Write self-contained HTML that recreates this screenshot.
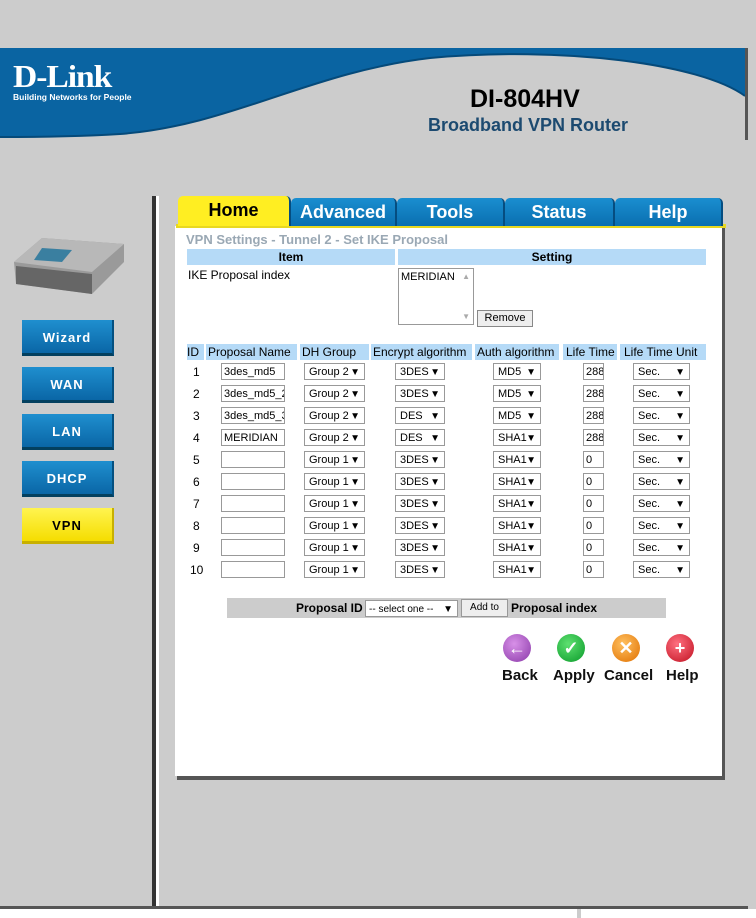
<!DOCTYPE html>
<html><head><meta charset="utf-8"><style>
*{margin:0;padding:0;box-sizing:border-box}
body{width:756px;height:918px;background:#cccccc;position:relative;overflow:hidden;font-family:"Liberation Sans",Arial,sans-serif;font-size:12px;color:#000}
.a{position:absolute}
.tab{position:absolute;top:198px;height:28px;background:linear-gradient(#1a8ed0,#0a6fb0);color:#fff;font-weight:bold;font-size:18px;text-align:center;line-height:28px;border-radius:5px 5px 0 0;border-right:2px solid #054d80}
.nb{position:absolute;left:22px;width:92px;height:36px;background:linear-gradient(#1f8fcf,#0a66a6);border-bottom:3px solid #03405f;border-right:2px solid #045080;color:#fff;font-weight:bold;font-size:13px;text-align:center;line-height:36px;letter-spacing:1px}
.hd{position:absolute;background:#b5daf7;height:16px;line-height:16px}
.in{position:absolute;height:17px;border:1px solid #999;background:#fff;font-size:11px;line-height:17px;padding-left:2px;color:#000;overflow:hidden;white-space:nowrap}
.sel{position:absolute;height:17px;border:1px solid #999;background:#fff;font-size:11px;line-height:17px;padding-left:4px;white-space:nowrap}
.sel b{position:absolute;right:4px;top:0;font-size:10px}
.id{position:absolute;left:193px;font-size:12px}
.ic{position:absolute;width:28px;height:28px;border-radius:50%;color:#fff;font-weight:bold;text-align:center;line-height:28px;font-size:18px}
.il{position:absolute;top:667px;font-size:15px;font-weight:bold;color:#111}
</style></head><body>
<svg class="a" style="left:0;top:48px" width="756" height="95">
<rect width="756" height="95" fill="#cccccc"/>
<path d="M0 0 H745 V48 C700 15 560 -2 430 10 C310 24 230 78 120 86 C70 89 30 89 0 89 Z" fill="#0a64a2"/>
<path d="M0 89 C30 89 70 89 120 86 C230 78 310 24 430 10 C560 -2 700 15 745 48" fill="none" stroke="#054a7a" stroke-width="2"/>
<rect x="745" y="0" width="3" height="92" fill="#555"/>
</svg>
<div class="a" style="left:13px;top:58px;color:#fff;font-family:'Liberation Serif',serif;font-weight:bold;font-size:32px;letter-spacing:-1px;transform:scaleX(1.05);transform-origin:left">D-Link</div>
<div class="a" style="left:13px;top:92px;color:#fff;font-size:8.5px;font-weight:bold">Building Networks for People</div>
<div class="a" style="left:470px;top:85px;font-size:25px;font-weight:bold">DI-804HV</div>
<div class="a" style="left:428px;top:115px;font-size:18px;font-weight:bold;color:#1c4a70">Broadband VPN Router</div>

<div class="a" style="left:152px;top:196px;width:4px;height:710px;background:#333"></div>
<div class="a" style="left:156px;top:196px;width:3px;height:710px;background:#fff"></div>
<div class="a" style="left:0;top:906px;width:748px;height:3px;background:#555"></div>
<div class="a" style="left:0;top:909px;width:756px;height:9px;background:#fff"></div>
<div class="a" style="left:577px;top:909px;width:4px;height:9px;background:#ccc"></div>

<svg class="a" style="left:12px;top:232px" width="114" height="70"><path d="M2 30 L30 6 L112 12 L112 30 L80 62 L4 52 Z" fill="#9a9a9a"/><path d="M2 30 L30 6 L112 12 L80 40 Z" fill="#b8b8b8"/><path d="M30 16 L60 18 L50 30 L22 28Z" fill="#3a7fa0"/><path d="M4 34 L80 42 L80 62 L4 52Z" fill="#666"/></svg>
<div class="nb" style="top:320px">Wizard</div>
<div class="nb" style="top:367px">WAN</div>
<div class="nb" style="top:414px">LAN</div>
<div class="nb" style="top:461px">DHCP</div>
<div class="nb" style="top:508px;background:linear-gradient(#fff450,#f5dd00);color:#000;border-color:#c8b000">VPN</div>

<div class="a" style="left:177px;top:228px;width:548px;height:552px;background:#555"></div>
<div class="a" style="left:175px;top:226px;width:547px;height:550px;background:#fff"></div>
<div class="a" style="left:176px;top:224px;width:550px;height:4px;background:#e8d820"></div>
<div class="tab" style="left:178px;width:113px;background:#ffee22;color:#000;top:196px;height:30px">Home</div>
<div class="tab" style="left:291px;width:106px">Advanced</div>
<div class="tab" style="left:397px;width:108px">Tools</div>
<div class="tab" style="left:505px;width:110px">Status</div>
<div class="tab" style="left:615px;width:108px">Help</div>

<div class="a" style="left:186px;top:232px;font-size:13px;font-weight:bold;color:#9aa8b4">VPN Settings - Tunnel 2 - Set IKE Proposal</div>
<div class="hd" style="left:187px;top:249px;width:208px;text-align:center;font-weight:bold">Item</div>
<div class="hd" style="left:398px;top:249px;width:308px;text-align:center;font-weight:bold">Setting</div>
<div class="a" style="left:188px;top:268px">IKE Proposal index</div>
<div class="a" style="left:398px;top:268px;width:76px;height:57px;border:1px solid #999;font-size:11px;padding:2px"><span>MERIDIAN</span><span style="position:absolute;right:3px;top:3px;color:#aaa;font-size:8px">▲</span><span style="position:absolute;right:3px;bottom:3px;color:#aaa;font-size:8px">▼</span></div>
<div class="a" style="left:477px;top:310px;width:56px;height:17px;border:1px solid #888;background:#eee;font-size:11px;text-align:center;line-height:15px">Remove</div>

<div class="hd" style="left:187px;top:344px;width:17px">ID</div>
<div class="hd" style="left:206px;top:344px;width:91px;padding-left:2px">Proposal Name</div>
<div class="hd" style="left:300px;top:344px;width:69px;padding-left:2px">DH Group</div>
<div class="hd" style="left:371px;top:344px;width:101px;padding-left:2px">Encrypt algorithm</div>
<div class="hd" style="left:475px;top:344px;width:84px;padding-left:2px">Auth algorithm</div>
<div class="hd" style="left:563px;top:344px;width:54px;padding-left:3px">Life Time</div>
<div class="hd" style="left:620px;top:344px;width:86px;padding-left:4px">Life Time Unit</div>

<div class="id" style="top:365px">1</div><div class="in" style="left:221px;top:363px;width:64px">3des_md5</div><div class="sel" style="left:304px;top:363px;width:61px">Group 2<b>▼</b></div><div class="sel" style="left:395px;top:363px;width:50px">3DES<b>▼</b></div><div class="sel" style="left:493px;top:363px;width:48px">MD5<b>▼</b></div><div class="in" style="left:583px;top:363px;width:21px">288</div><div class="sel" style="left:633px;top:363px;width:57px">Sec.<b>▼</b></div>
<div class="id" style="top:387px">2</div><div class="in" style="left:221px;top:385px;width:64px">3des_md5_2</div><div class="sel" style="left:304px;top:385px;width:61px">Group 2<b>▼</b></div><div class="sel" style="left:395px;top:385px;width:50px">3DES<b>▼</b></div><div class="sel" style="left:493px;top:385px;width:48px">MD5<b>▼</b></div><div class="in" style="left:583px;top:385px;width:21px">288</div><div class="sel" style="left:633px;top:385px;width:57px">Sec.<b>▼</b></div>
<div class="id" style="top:409px">3</div><div class="in" style="left:221px;top:407px;width:64px">3des_md5_3</div><div class="sel" style="left:304px;top:407px;width:61px">Group 2<b>▼</b></div><div class="sel" style="left:395px;top:407px;width:50px">DES<b>▼</b></div><div class="sel" style="left:493px;top:407px;width:48px">MD5<b>▼</b></div><div class="in" style="left:583px;top:407px;width:21px">288</div><div class="sel" style="left:633px;top:407px;width:57px">Sec.<b>▼</b></div>
<div class="id" style="top:431px">4</div><div class="in" style="left:221px;top:429px;width:64px">MERIDIAN</div><div class="sel" style="left:304px;top:429px;width:61px">Group 2<b>▼</b></div><div class="sel" style="left:395px;top:429px;width:50px">DES<b>▼</b></div><div class="sel" style="left:493px;top:429px;width:48px">SHA1<b>▼</b></div><div class="in" style="left:583px;top:429px;width:21px">288</div><div class="sel" style="left:633px;top:429px;width:57px">Sec.<b>▼</b></div>
<div class="id" style="top:453px">5</div><div class="in" style="left:221px;top:451px;width:64px"></div><div class="sel" style="left:304px;top:451px;width:61px">Group 1<b>▼</b></div><div class="sel" style="left:395px;top:451px;width:50px">3DES<b>▼</b></div><div class="sel" style="left:493px;top:451px;width:48px">SHA1<b>▼</b></div><div class="in" style="left:583px;top:451px;width:21px">0</div><div class="sel" style="left:633px;top:451px;width:57px">Sec.<b>▼</b></div>
<div class="id" style="top:475px">6</div><div class="in" style="left:221px;top:473px;width:64px"></div><div class="sel" style="left:304px;top:473px;width:61px">Group 1<b>▼</b></div><div class="sel" style="left:395px;top:473px;width:50px">3DES<b>▼</b></div><div class="sel" style="left:493px;top:473px;width:48px">SHA1<b>▼</b></div><div class="in" style="left:583px;top:473px;width:21px">0</div><div class="sel" style="left:633px;top:473px;width:57px">Sec.<b>▼</b></div>
<div class="id" style="top:497px">7</div><div class="in" style="left:221px;top:495px;width:64px"></div><div class="sel" style="left:304px;top:495px;width:61px">Group 1<b>▼</b></div><div class="sel" style="left:395px;top:495px;width:50px">3DES<b>▼</b></div><div class="sel" style="left:493px;top:495px;width:48px">SHA1<b>▼</b></div><div class="in" style="left:583px;top:495px;width:21px">0</div><div class="sel" style="left:633px;top:495px;width:57px">Sec.<b>▼</b></div>
<div class="id" style="top:519px">8</div><div class="in" style="left:221px;top:517px;width:64px"></div><div class="sel" style="left:304px;top:517px;width:61px">Group 1<b>▼</b></div><div class="sel" style="left:395px;top:517px;width:50px">3DES<b>▼</b></div><div class="sel" style="left:493px;top:517px;width:48px">SHA1<b>▼</b></div><div class="in" style="left:583px;top:517px;width:21px">0</div><div class="sel" style="left:633px;top:517px;width:57px">Sec.<b>▼</b></div>
<div class="id" style="top:541px">9</div><div class="in" style="left:221px;top:539px;width:64px"></div><div class="sel" style="left:304px;top:539px;width:61px">Group 1<b>▼</b></div><div class="sel" style="left:395px;top:539px;width:50px">3DES<b>▼</b></div><div class="sel" style="left:493px;top:539px;width:48px">SHA1<b>▼</b></div><div class="in" style="left:583px;top:539px;width:21px">0</div><div class="sel" style="left:633px;top:539px;width:57px">Sec.<b>▼</b></div>
<div class="id" style="top:563px;left:190px">10</div><div class="in" style="left:221px;top:561px;width:64px"></div><div class="sel" style="left:304px;top:561px;width:61px">Group 1<b>▼</b></div><div class="sel" style="left:395px;top:561px;width:50px">3DES<b>▼</b></div><div class="sel" style="left:493px;top:561px;width:48px">SHA1<b>▼</b></div><div class="in" style="left:583px;top:561px;width:21px">0</div><div class="sel" style="left:633px;top:561px;width:57px">Sec.<b>▼</b></div>

<div class="a" style="left:227px;top:598px;width:439px;height:20px;background:#cccccc"></div>
<div class="a" style="left:296px;top:601px;font-weight:bold;font-size:12px">Proposal ID</div>
<div class="sel" style="left:365px;top:600px;width:93px;font-size:10px;padding-left:3px">-- select one --<b>▼</b></div>
<div class="a" style="left:461px;top:599px;width:47px;height:18px;border:1px solid #999;background:#eee;font-size:10px;text-align:center;line-height:16px">Add to</div>
<div class="a" style="left:511px;top:601px;font-weight:bold;font-size:12px">Proposal index</div>

<div class="ic" style="left:503px;top:634px;background:radial-gradient(circle at 40% 35%,#d890e8,#8a3aa8)">←</div>
<div class="ic" style="left:557px;top:634px;background:radial-gradient(circle at 40% 35%,#5ee070,#0a9a2a)">✓</div>
<div class="ic" style="left:612px;top:634px;background:radial-gradient(circle at 40% 35%,#ffc060,#e07000)">✕</div>
<div class="ic" style="left:666px;top:634px;background:radial-gradient(circle at 40% 35%,#ff7080,#c01020)">+</div>
<div class="il" style="left:502px">Back</div>
<div class="il" style="left:553px">Apply</div>
<div class="il" style="left:604px">Cancel</div>
<div class="il" style="left:666px">Help</div>
</body></html>
